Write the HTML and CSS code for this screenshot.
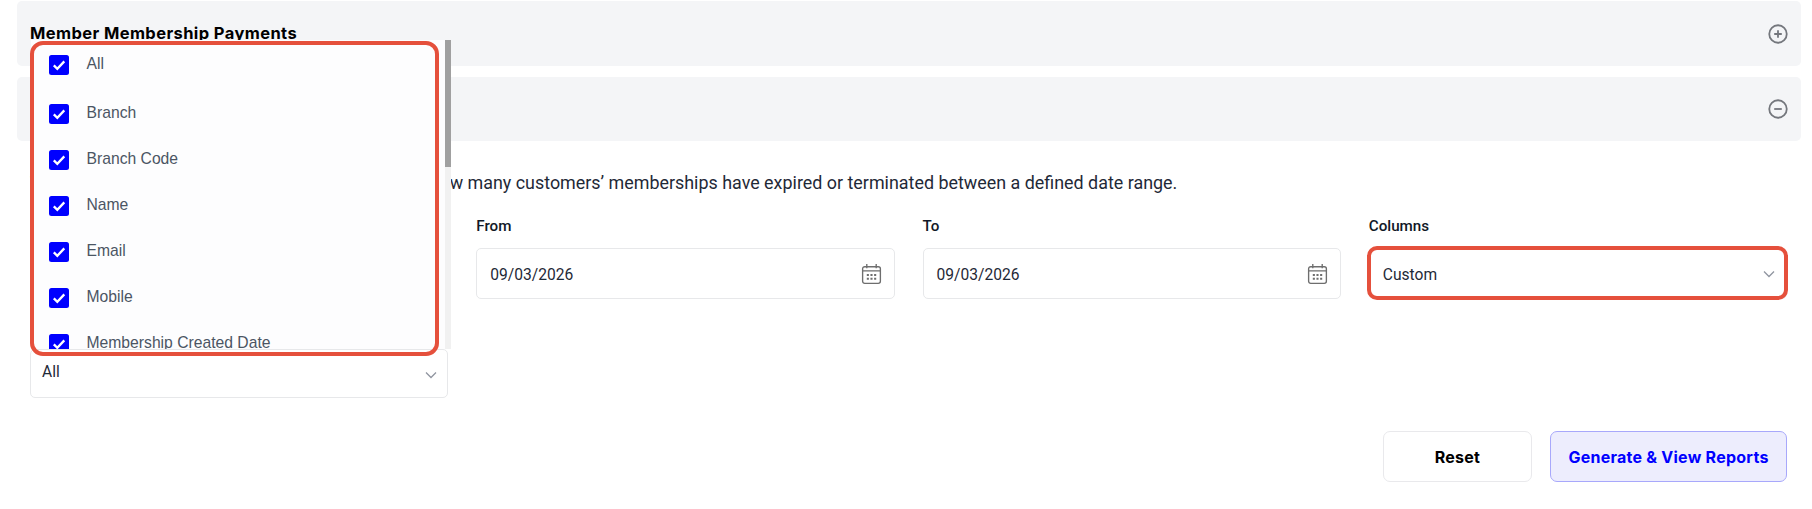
FILE: index.html
```html
<!DOCTYPE html>
<html lang="en">
<head>
<meta charset="utf-8">
<title>Reports</title>
<link rel="stylesheet" href="styles.css">
</head>
<body>
<main class="page">
  <section class="panel panel-first">
    <h2 class="panel-title">Member Membership Payments</h2>
    <svg class="panel-icon" viewBox="0 0 20 20"><circle cx="10" cy="10" r="8.75"/><path d="M10 6.2v7.6M6.2 10h7.6"/></svg>
  </section>
  <section class="panel panel-second">
    <h2 class="panel-title">Member Membership Expiry</h2>
    <svg class="panel-icon" viewBox="0 0 20 20"><circle cx="10" cy="10" r="8.75"/><path d="M6.2 10h7.6"/></svg>
  </section>
  <div class="content">
    <p class="description">This report gives you a brief summary overview of how many customers’ memberships have expired or terminated between a defined date range.</p>
    <div class="form-grid">
      <div class="field">
        <label class="field-label">Branch</label>
        <div class="control"><span class="control-value">All</span><svg class="chevron" viewBox="0 0 12 8"><path d="M1 1.5l5 5 5-5"/></svg></div>
      </div>
      <div class="field">
        <label class="field-label">From</label>
        <div class="control"><span class="control-value">09/03/2026</span>
          <svg class="calendar" viewBox="0 0 22 22"><path class="cal-line" d="M2.5 6.5a2 2 0 0 1 2-2h13a2 2 0 0 1 2 2v12a2 2 0 0 1-2 2h-13a2 2 0 0 1-2-2zM2.5 8.5h17M6.5 2v4M15.5 2v4"/><path class="cal-dots" d="M6.5 11.5h2v2h-2zM10 11.5h2v2h-2zM13.5 11.5h2v2h-2zM6.5 15h2v2h-2zM10 15h2v2h-2zM13.5 15h2v2h-2z"/></svg>
        </div>
      </div>
      <div class="field">
        <label class="field-label">To</label>
        <div class="control"><span class="control-value">09/03/2026</span>
          <svg class="calendar" viewBox="0 0 22 22"><path class="cal-line" d="M2.5 6.5a2 2 0 0 1 2-2h13a2 2 0 0 1 2 2v12a2 2 0 0 1-2 2h-13a2 2 0 0 1-2-2zM2.5 8.5h17M6.5 2v4M15.5 2v4"/><path class="cal-dots" d="M6.5 11.5h2v2h-2zM10 11.5h2v2h-2zM13.5 11.5h2v2h-2zM6.5 15h2v2h-2zM10 15h2v2h-2zM13.5 15h2v2h-2z"/></svg>
        </div>
      </div>
      <div class="field">
        <label class="field-label">Columns</label>
        <div class="control control-marked"><span class="control-value">Custom</span><svg class="chevron" viewBox="0 0 12 8"><path d="M1 1.5l5 5 5-5"/></svg></div>
      </div>
      <div class="field field-short">
        <label class="field-label">Status</label>
        <div class="control control-short"><span class="short-value">All</span><svg class="chevron chevron-low" viewBox="0 0 12 8"><path d="M1 1.5l5 5 5-5"/></svg></div>
        <div class="menu-wrap">
          <ul class="menu">
            <li class="menu-item menu-item-all"><svg class="check" viewBox="0 0 20 20"><path d="M4.8 10.4l3.5 3.4 7-7.4"/></svg><span class="menu-text">All</span></li>
            <li class="menu-item"><svg class="check" viewBox="0 0 20 20"><path d="M4.8 10.4l3.5 3.4 7-7.4"/></svg><span class="menu-text">Branch</span></li>
            <li class="menu-item"><svg class="check" viewBox="0 0 20 20"><path d="M4.8 10.4l3.5 3.4 7-7.4"/></svg><span class="menu-text">Branch Code</span></li>
            <li class="menu-item"><svg class="check" viewBox="0 0 20 20"><path d="M4.8 10.4l3.5 3.4 7-7.4"/></svg><span class="menu-text">Name</span></li>
            <li class="menu-item"><svg class="check" viewBox="0 0 20 20"><path d="M4.8 10.4l3.5 3.4 7-7.4"/></svg><span class="menu-text">Email</span></li>
            <li class="menu-item"><svg class="check" viewBox="0 0 20 20"><path d="M4.8 10.4l3.5 3.4 7-7.4"/></svg><span class="menu-text">Mobile</span></li>
            <li class="menu-item"><svg class="check" viewBox="0 0 20 20"><path d="M4.8 10.4l3.5 3.4 7-7.4"/></svg><span class="menu-text">Membership Created Date</span></li>
          </ul>
          <div class="menu-track"><div class="menu-thumb"></div></div>
          <div class="menu-marker"></div>
        </div>
      </div>
    </div>
    <div class="actions">
      <button class="btn btn-reset" type="button">Reset</button>
      <button class="btn btn-primary" type="button">Generate &amp; View Reports</button>
    </div>
  </div>
</main>
</body>
</html>
```

FILE: styles.css
```css
* { box-sizing: border-box; }
html, body { margin: 0; height: 100%; overflow: hidden; background: #fff; }
.page { padding: 1px 11px 0 17px; font-family: Roboto, sans-serif; color: #111827; }

.panel {
  display: flex;
  align-items: center;
  justify-content: space-between;
  background: #f4f5f7;
  border-radius: 5px;
  padding: 0 13px 0 13px;
}
.panel-first { height: 65px; margin-bottom: 11px; }
.panel-second { height: 64px; }
.panel-title { margin: -2px 0 0; font: 700 16.5px Inter, sans-serif; letter-spacing: 0.4px; color: #000; }
.panel-icon { width: 20px; height: 20px; fill: none; stroke: #74777d; stroke-width: 1.8; }

.content { padding: 0 14px 0 13px; }
.description { margin: 30px 0 0; font-size: 17.9px; line-height: 24px; color: #1f2937; white-space: nowrap; }

.form-grid {
  display: grid;
  grid-template-columns: repeat(4, 1fr);
  column-gap: 28px;
  row-gap: 18px;
  margin-top: 21px;
}
.field { position: relative; }
.field-label { display: block; height: 20px; margin-bottom: 12px; font-size: 15.2px; line-height: 20px; font-weight: 500; color: #111827; }
.control {
  position: relative;
  display: flex;
  align-items: center;
  justify-content: space-between;
  height: 51px;
  padding: 0 11px 0 13px;
  background: #fff;
  border: 1px solid #e7e8ea;
  border-radius: 5px;
  font-size: 15.6px;
  color: #1f2937;
}
.control-value { margin-top: 2px; }
.control-short { height: 49px; padding-left: 11px; padding-right: 10px; }
.short-value { margin-top: -3px; }
.chevron-low { margin-top: 3px; }
.control-marked::after {
  content: "";
  position: absolute;
  inset: -3px -2px -2px -3px;
  border: 4px solid #e5503c;
  border-radius: 10px;
}
.chevron { width: 12px; height: 8px; fill: none; stroke: #9095a0; stroke-width: 1.3; }
.calendar { width: 23px; height: 23px; fill: none; }
.cal-line { stroke: #6e6e6e; stroke-width: 1.3; }
.cal-dots { fill: #6e6e6e; }

.menu-wrap {
  position: absolute;
  left: 1px;
  right: -3px;
  bottom: 49px;
  height: 309px;
}
.menu {
  height: 100%;
  margin: 0;
  padding: 14.5px 0 0 18px;
  list-style: none;
  overflow: hidden;
  background: #fdfdfe;
  font: 15.7px "Liberation Sans", Arial, sans-serif;
  color: #4b5563;
}
.menu-item { display: flex; align-items: center; gap: 17.5px; height: 20px; margin-bottom: 26px; white-space: nowrap; }
.menu-item-all { margin-bottom: 29.5px; }
.menu-text { margin-top: -2px; }
.check { flex: none; width: 20px; height: 20px; background: #0000ff; border-radius: 2.5px; fill: none; stroke: #fff; stroke-width: 2.3; }
.menu-track { position: absolute; top: 0; right: 0; bottom: 0; width: 6px; background: #f1f1f1; }
.menu-thumb { height: 127px; background: #a0a0a0; }
.menu-marker {
  position: absolute;
  left: -1px;
  top: 1px;
  width: 409px;
  height: 315px;
  border: 4px solid #e5503c;
  border-radius: 13px;
  pointer-events: none;
}

.actions { display: flex; justify-content: flex-end; gap: 18px; margin-top: 33px; }
.btn { height: 51px; border-radius: 7px; font: 700 16px Inter, sans-serif; letter-spacing: 0.25px; background: #fff; cursor: pointer; }
.btn-reset { width: 149px; border: 1.5px solid #e9e9ec; color: #000; }
.btn-primary { width: 237px; border: 1.5px solid #a8a8fb; background: #ededfd; color: #0000ff; }
```
